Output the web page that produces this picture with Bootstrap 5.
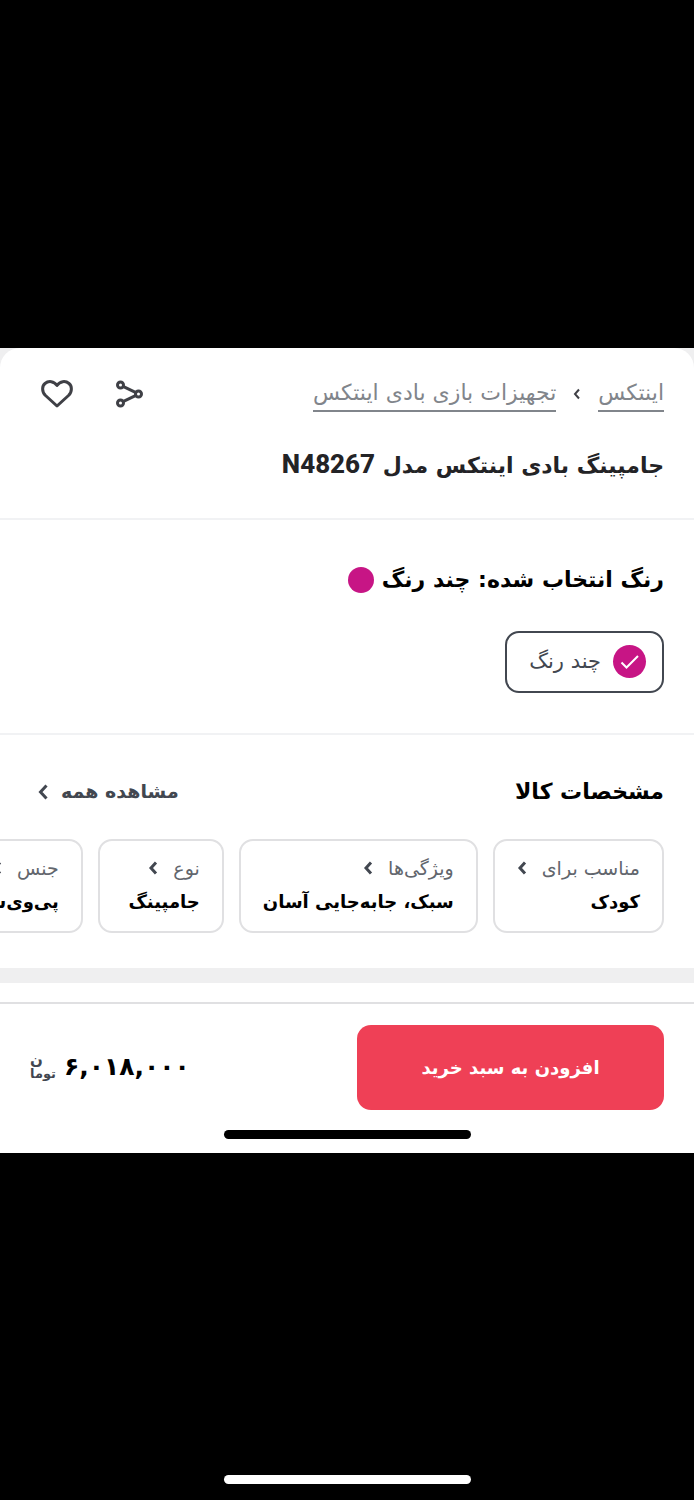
<!DOCTYPE html>
<html lang="fa" dir="rtl">
<head>
<meta charset="utf-8">
<meta name="viewport" content="width=device-width, initial-scale=1">
<title>جامپینگ بادی اینتکس مدل N48267</title>
<link href="https://cdn.jsdelivr.net/npm/bootstrap@5.3.0/dist/css/bootstrap.min.css" rel="stylesheet">
<style>
  body { font-family: "DejaVu Sans", sans-serif; background: #000; color: #000; }
  .letterbox { flex: 1 1 0; }
  .home-bar { width: 247px; height: 9px; border-radius: 5px; }
  .sheet { background: #efeff0; overflow: hidden; }
  .panel { background: #fff; padding-inline: 30px; }
  .panel-top { border-radius: 20px 20px 0 0; padding-top: 28px; padding-bottom: 32px; border-bottom: 2px solid #f1f2f4; }
  .panel-color { padding-top: 40px; padding-bottom: 40px; border-bottom: 2px solid #f1f2f4; }
  .panel-specs { padding-top: 37px; padding-bottom: 35px; }
  .crumb-row { line-height: 36px; font-size: 22px; gap: 17px; }
  .crumb-row a { color: #81858b; text-decoration: none; border-bottom: 2px solid #81858b; line-height: 34px; }
  .tool-btn { border: 0; background: none; padding: 0; line-height: 0; color: #3f4046; }
  .tools { gap: 40px; padding-inline-end: 10px; }
  .heading-text { font-size: 22px; line-height: 40px; font-weight: 700; margin: 0; }
  .title-text { color: #232326; margin-top: 34px; }
  .latin { font-family: Roboto, sans-serif; font-size: 26px; line-height: 26px; font-weight: 800; }
  .dot { width: 26px; height: 26px; border-radius: 50%; background: #c71585; }
  .swatch { width: 33px; height: 33px; border-radius: 50%; background: #c71585; }
  .color-option { height: 62px; border: 2px solid #424750; border-radius: 14px; padding-inline: 16px 22px; gap: 12px; font-size: 21px; color: #424750; margin-top: 31px; cursor: pointer; }
  .all-link { color: #424750; font-size: 19px; font-weight: 700; text-decoration: none; padding-inline-end: 7px; gap: 12px; }
  .spec-list { gap: 15px; margin-top: 27px; margin-inline-end: -30px; overflow: hidden; }
  .spec { flex: none; display: block; min-width: 126px; border: 2px solid #e0e0e2; border-radius: 14px; padding: 11px 22px; height: 94px; color: #000; text-decoration: none; white-space: nowrap; }
  .spec-name { font-size: 19px; line-height: 33px; color: #62666d; gap: 15px; }
  .spec-value { font-size: 18px; line-height: 34px; font-weight: 700; }
  .divider-band { height: 15px; }
  .blank-band { height: 19px; background: #fff; }
  .buy-bar { border-top: 2px solid #e0e0e2; padding-top: 21px; padding-bottom: 14px; }
  .buy-btn { width: calc(50% - 10px); height: 85px; border: 0; border-radius: 14px; background: #ef4056; color: #fff; font-size: 18px; font-weight: 700; }
  .price { font-size: 25px; line-height: 40px; font-weight: 700; gap: 8px; }
  .toman { font-size: 13px; line-height: 13px; color: #424750; }
  .toman-top { font-size: 15px; }
  .bar-gap { margin-top: 20px; }
</style>
</head>
<body>
<div class="d-flex flex-column min-vh-100">
  <div class="letterbox"></div>
  <main class="sheet">
    <section class="panel panel-top">
      <div class="d-flex justify-content-between align-items-center">
        <nav class="crumb-row d-flex align-items-center" aria-label="مسیر">
          <a href="#">اینتکس</a>
          <svg width="8" height="12" viewBox="0 0 8 12" fill="none" stroke="#3f4046" stroke-width="2"><path d="M6 1.500 2 6l4 4.500"/></svg>
          <a href="#">تجهیزات بازی بادی اینتکس</a>
        </nav>
        <div class="tools d-flex align-items-center">
          <button class="tool-btn" type="button" aria-label="اشتراک‌گذاری">
            <svg width="30" height="30" viewBox="0 0 30 30" fill="none" stroke="currentColor" stroke-width="3"><circle cx="6.500" cy="6" r="3"/><circle cx="6.500" cy="24" r="3"/><circle cx="24.500" cy="15" r="3"/><path d="M9 7.300 22 13.700M9 22.700 22 16.300"/></svg>
          </button>
          <button class="tool-btn" type="button" aria-label="افزودن به علاقه‌مندی">
            <svg width="34" height="30" viewBox="0 0 34 30" fill="none" stroke="currentColor" stroke-width="3" stroke-linejoin="round"><path d="M17 27 5.500 16.500C1.500 12.500 2 7 5 4.500c3.500-3 9-2.500 12 2 3-4.500 8.500-5 12-2 3 2.500 3.500 8-.5 12z"/></svg>
          </button>
        </div>
      </div>
      <h1 class="heading-text title-text">جامپینگ بادی اینتکس مدل <span class="latin">N48267</span></h1>
    </section>

    <section class="panel panel-color">
      <div class="d-flex align-items-center gap-2">
        <h2 class="heading-text">رنگ انتخاب شده: چند رنگ</h2>
        <span class="dot"></span>
      </div>
      <input class="visually-hidden" type="radio" name="color" id="multi" checked>
      <label class="color-option d-inline-flex align-items-center" for="multi">
        <span class="swatch d-flex align-items-center justify-content-center"><svg width="20" height="16" viewBox="0 0 20 16" fill="none" stroke="#fff" stroke-width="2"><path d="M1.500 8.500 6.500 13.500 18 2"/></svg></span>
        <span>چند رنگ</span>
      </label>
    </section>

    <section class="panel panel-specs">
      <div class="d-flex justify-content-between align-items-center">
        <h2 class="heading-text title-spec">مشخصات کالا</h2>
        <a class="all-link d-flex align-items-center" href="#">مشاهده همه
          <svg width="12" height="16" viewBox="0 0 12 16" fill="none" stroke="currentColor" stroke-width="3"><path d="M9.500 1.500 3.500 8l6 6.500"/></svg></a>
      </div>
      <div class="spec-list d-flex">
        <a class="spec" href="#"><div class="spec-name d-flex align-items-center">مناسب برای <svg width="10" height="14" viewBox="0 0 10 14" fill="none" stroke="#424750" stroke-width="3"><path d="M8 1.500 3 7l5 5.500"/></svg></div><div class="spec-value">کودک</div></a>
        <a class="spec" href="#"><div class="spec-name d-flex align-items-center">ویژگی‌ها <svg width="10" height="14" viewBox="0 0 10 14" fill="none" stroke="#424750" stroke-width="3"><path d="M8 1.500 3 7l5 5.500"/></svg></div><div class="spec-value">سبک، جابه‌جایی آسان</div></a>
        <a class="spec" href="#"><div class="spec-name d-flex align-items-center">نوع <svg width="10" height="14" viewBox="0 0 10 14" fill="none" stroke="#424750" stroke-width="3"><path d="M8 1.500 3 7l5 5.500"/></svg></div><div class="spec-value">جامپینگ</div></a>
        <a class="spec" href="#"><div class="spec-name d-flex align-items-center">جنس <svg width="10" height="14" viewBox="0 0 10 14" fill="none" stroke="#424750" stroke-width="3"><path d="M8 1.500 3 7l5 5.500"/></svg></div><div class="spec-value">پی‌وی‌سی</div></a>
      </div>
    </section>
    <div class="divider-band"></div>
    <div class="blank-band"></div>

    <section class="panel buy-bar">
      <div class="d-flex justify-content-between align-items-center">
        <button class="buy-btn" type="button">افزودن به سبد خرید</button>
        <div class="price d-flex align-items-center">
          <span dir="ltr">۶,۰۱۸,۰۰۰</span>
          <span class="toman d-flex flex-column align-items-end"><span class="toman-top">ن</span><span>توما</span></span>
        </div>
      </div>
      <div class="home-bar bg-black mx-auto bar-gap"></div>
    </section>
  </main>
  <div class="letterbox d-flex align-items-end justify-content-center"><div class="home-bar bg-white mb-3"></div></div>
</div>
<script src="https://cdn.jsdelivr.net/npm/bootstrap@5.3.0/dist/js/bootstrap.bundle.min.js"></script>
</body>
</html>
